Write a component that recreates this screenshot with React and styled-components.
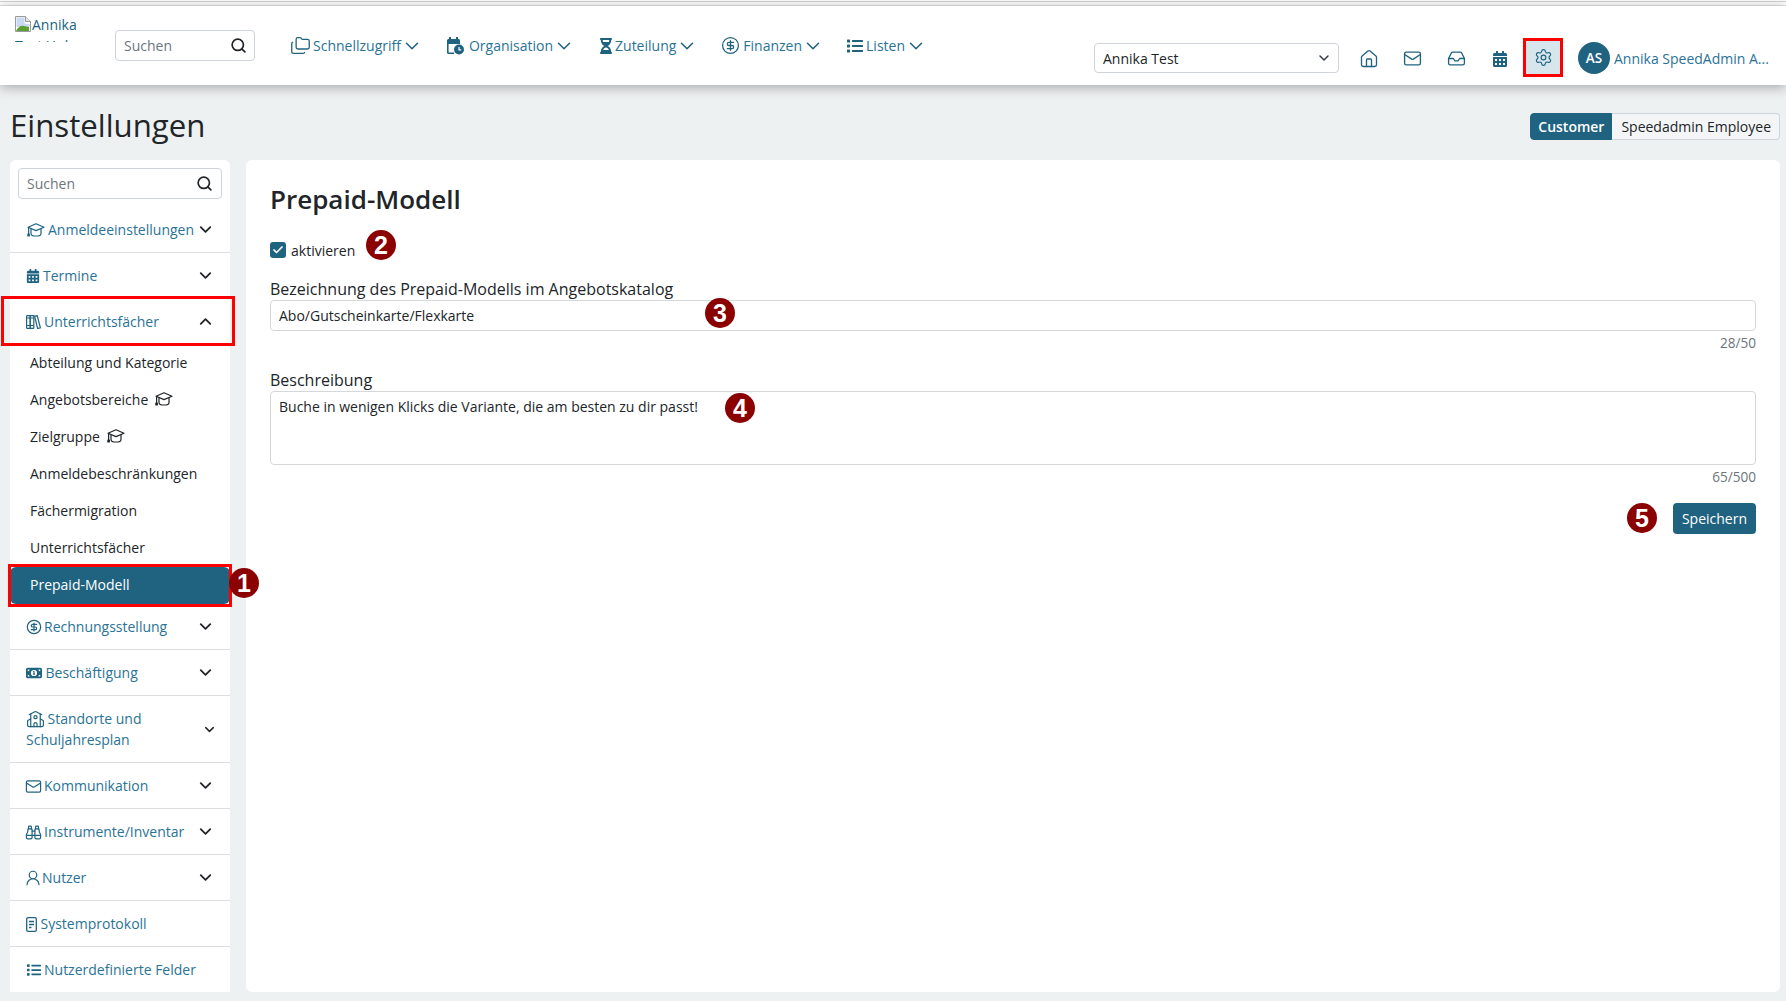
import React from "react";
import styled, { createGlobalStyle } from "styled-components";
import {
  ChevronDown,
  ChevronUp,
  CircleDollarSign,
  Folders,
  House,
  Inbox,
  Mail,
  School,
  Search,
  Settings,
  Binoculars,
  UserRound,
  Check,
} from "lucide-react";
import { FaCalendarAlt, FaHourglassHalf, FaList } from "react-icons/fa";
import { FaMoneyBill1 } from "react-icons/fa6";

const TEAL = "#206380";
const LINK = "#2a7396";

const GlobalStyle = createGlobalStyle`
  html, body {
    margin: 0;
    padding: 0;
    background: #eef1f2;
    font-family: "Open Sans", "Liberation Sans", sans-serif;
    font-size: 14px;
    color: #212529;
    overflow: hidden;
  }
  * { box-sizing: border-box; }
`;

const ClockSvg = styled.svg`
  margin-right: 2px;
`;

function CalendarClock() {
  return (
    <ClockSvg width="18" height="18" viewBox="0 0 18 18" fill={TEAL}>
      <rect x="3" y="0" width="2" height="3" />
      <rect x="10" y="0" width="2" height="3" />
      <path d="M1 3.5a1.5 1.5 0 0 1 1.5-1.5h10A1.5 1.5 0 0 1 14 3.5V7H1z" />
      <path d="M1 7h1.6v8.4h5.6V17H2.5A1.5 1.5 0 0 1 1 15.5z" />
      <circle cx="13" cy="12.5" r="5" />
      <path d="M13 10v2.8h2.2" stroke="#fff" strokeWidth="1.2" fill="none" />
    </ClockSvg>
  );
}

function Books() {
  return (
    <svg width="15" height="14" viewBox="0 0 15 14" fill="none" stroke={TEAL} strokeWidth="1.2">
      <rect x="0.6" y="0.6" width="3.6" height="12.8" rx="0.6" />
      <rect x="4.2" y="0.6" width="3.6" height="12.8" rx="0.6" />
      <path d="M8.6 1.2l2.6-.6 3.2 12.2-2.8.7z" />
      <path d="M0.6 10.5h7.2M0.6 3h7.2" />
    </svg>
  );
}

function GradCap({ color = TEAL }) {
  return (
    <svg width="18" height="14" viewBox="0 0 18 14" fill="none" stroke={color} strokeWidth="1.2" strokeLinejoin="round">
      <path d="M9 .8l8 3.4-8 3.4-8-3.4z" />
      <path d="M4 5.8v4.6c0 1.5 2.3 2.6 5 2.6s5-1.1 5-2.6V5.8" />
      <path d="M1.6 4.6v6.4" />
      <path d="M.9 11h1.4v2H.9z" fill={color} />
    </svg>
  );
}

function LogFile() {
  return (
    <svg width="11" height="15" viewBox="0 0 11 15" fill="none" stroke={TEAL} strokeWidth="1.3">
      <rect x="0.7" y="0.7" width="9.6" height="13.6" rx="1.4" />
      <path d="M3 4.5h5M3 7.5h5M3 10.5h2.5" />
    </svg>
  );
}

function BrokenImage() {
  return (
    <svg width="16" height="16" viewBox="0 0 16 16">
      <path d="M.5.5h10l5 5v10H.5z" fill="#fff" stroke="#9a9a9a" />
      <path d="M10.5.5v5h5" fill="#e8e8e8" stroke="#9a9a9a" />
      <path d="M1.5 1.5h8v6l5 .5v3H1.5z" fill="#c9d9f2" />
      <path d="M1 15c2-4 5-6 8-5l5 1v4z" fill="#5b9e33" />
    </svg>
  );
}

const FolderIcon = styled(Folders)`
  margin: 0 -1px 0 -1px;
`;

const HourglassIcon = styled(FaHourglassHalf)`
  margin-right: -2px;
`;

const navItems = [
  { label: "Schnellzugriff", icon: <FolderIcon size={21} strokeWidth={1.5} /> },
  { label: "Organisation", icon: <CalendarClock /> },
  { label: "Zuteilung", icon: <HourglassIcon size={16} /> },
  { label: "Finanzen", icon: <CircleDollarSign size={19} strokeWidth={1.6} /> },
  { label: "Listen", icon: <FaList size={16} /> },
];

const sideTop = [
  { label: "Anmeldeeinstellungen", icon: <GradCap />, w: 19, chevron: true },
  { label: "Termine", icon: <FaCalendarAlt size={14} />, w: 14, chevron: true },
];

const subItems = [
  { label: "Abteilung und Kategorie" },
  { label: "Angebotsbereiche", cap: true },
  { label: "Zielgruppe", cap: true },
  { label: "Anmeldebeschränkungen" },
  { label: "Fächermigration" },
  { label: "Unterrichtsfächer" },
];

const sideBottom = [
  { label: "Rechnungsstellung", icon: <CircleDollarSign size={16} strokeWidth={1.8} />, w: 15, chevron: true },
  { label: "Beschäftigung", icon: <FaMoneyBill1 size={16} />, w: 16.5, chevron: true },
  { label: "Standorte und Schuljahresplan", icon: <School size={19} strokeWidth={1.5} />, w: 18.5, chevron: true, tall: true },
  { label: "Kommunikation", icon: <Mail size={17} strokeWidth={1.7} />, w: 15, chevron: true },
  { label: "Instrumente/Inventar", icon: <Binoculars size={17} strokeWidth={1.7} />, w: 15, chevron: true },
  { label: "Nutzer", icon: <UserRound size={18} strokeWidth={1.6} />, w: 13, chevron: true },
  { label: "Systemprotokoll", icon: <LogFile />, w: 11.5 },
  { label: "Nutzerdefinierte Felder", icon: <FaList size={14} />, w: 15, last: true },
];

function SideRow({ item }) {
  return (
    <Row $tall={item.tall} $last={item.last}>
      <RowLabel $tall={item.tall}>
        <RowIcon $w={item.w}>{item.icon}</RowIcon>
        {item.label}
      </RowLabel>
      {item.chevron && (
        <RowChevron $tall={item.tall}>
          <ChevronDown size={item.tall ? 15 : 19} strokeWidth={2.3} />
        </RowChevron>
      )}
    </Row>
  );
}

export default function App() {
  return (
    <>
      <GlobalStyle />
      <TopStrip />
      <Header>
        <Logo>
          <LogoLine>
            <BrokenImage />
            Annika
          </LogoLine>
          <LogoLine>Test Hub</LogoLine>
        </Logo>
        <HeaderSearch>
          <span>Suchen</span>
          <Search size={17} strokeWidth={2.4} color="#212529" />
        </HeaderSearch>
        <Nav>
          {navItems.map((item) => (
            <NavItem key={item.label}>
              {item.icon}
              <span>{item.label}</span>
              <NavChevron size={22} strokeWidth={1.7} />
            </NavItem>
          ))}
        </Nav>
        <HeaderRight>
          <SchoolSelect>
            <span>Annika Test</span>
            <ChevronDown size={16} strokeWidth={2.2} color="#343a40" />
          </SchoolSelect>
          <IconGroup>
            <IconButton><House size={20} strokeWidth={1.6} /></IconButton>
            <IconButton><Mail size={19} strokeWidth={1.7} /></IconButton>
            <IconButton><Inbox size={19} strokeWidth={1.7} /></IconButton>
            <IconButton><FaCalendarAlt size={16} /></IconButton>
            <IconButton $active><Settings size={19} strokeWidth={1.5} /></IconButton>
          </IconGroup>
          <Avatar>AS</Avatar>
          <UserName>Annika SpeedAdmin A...</UserName>
        </HeaderRight>
      </Header>

      <TitleBar>
        <PageTitle>Einstellungen</PageTitle>
        <RoleToggle>
          <RoleButton $active>Customer</RoleButton>
          <RoleButton>Speedadmin Employee</RoleButton>
        </RoleToggle>
      </TitleBar>

      <Columns>
        <Sidebar>
          <SideSearchWrap>
            <SideSearch>
              <span>Suchen</span>
              <Search size={17} strokeWidth={2.4} color="#212529" />
            </SideSearch>
          </SideSearchWrap>
          {sideTop.map((item) => (
            <SideRow key={item.label} item={item} />
          ))}
          <Row $open>
            <RowLabel>
              <RowIcon $w={15}><Books /></RowIcon>
              Unterrichtsfächer
            </RowLabel>
            <RowChevron><ChevronUp size={19} strokeWidth={2.3} /></RowChevron>
            <Highlight $inset="-3px -5px -1px -9px" />
          </Row>
          {subItems.map((item) => (
            <SubItem key={item.label}>
              {item.label}
              {item.cap && <GradCap color="#212529" />}
            </SubItem>
          ))}
          <SubItem $active>
            Prepaid-Modell
            <Highlight $inset="-3px -2px" />
            <Badge $left="219px" $top="1px">1</Badge>
          </SubItem>
          {sideBottom.map((item) => (
            <SideRow key={item.label} item={item} />
          ))}
        </Sidebar>

        <Panel>
          <PanelTitle>Prepaid-Modell</PanelTitle>
          <CheckRow>
            <CheckBox><Check size={12} strokeWidth={3.5} color="#fff" /></CheckBox>
            <span>aktivieren</span>
            <Badge $left="96px" $top="-9px">2</Badge>
          </CheckRow>
          <Field>
            <FieldLabel>Bezeichnung des Prepaid-Modells im Angebotskatalog</FieldLabel>
            <TextBox>Abo/Gutscheinkarte/Flexkarte</TextBox>
            <Counter>28/50</Counter>
            <Badge $left="435px" $top="20px">3</Badge>
          </Field>
          <Field $second>
            <FieldLabel>Beschreibung</FieldLabel>
            <TextBox $area>Buche in wenigen Klicks die Variante, die am besten zu dir passt!</TextBox>
            <Counter>65/500</Counter>
            <Badge $left="455px" $top="24px">4</Badge>
          </Field>
          <Actions>
            <SaveButton>
              Speichern
              <Badge $left="-46px" $top="0px">5</Badge>
            </SaveButton>
          </Actions>
        </Panel>
      </Columns>
    </>
  );
}

const TopStrip = styled.div`
  height: 6px;
  background: #fff;
  border-top: 1px solid #fff;
  border-bottom: 1px solid #e4e4e4;
  box-shadow: inset 0 1px 0 #d2d2d2;
`;

const Header = styled.header`
  position: relative;
  z-index: 2;
  height: 79px;
  background: #fff;
  display: flex;
  align-items: flex-start;
  padding: 24px 17px 0 15px;
  box-shadow: 0 2px 12px rgba(0, 0, 0, 0.32);
`;

const Logo = styled.div`
  width: 65px;
  height: 28px;
  margin-top: -16px;
  margin-right: 35px;
  overflow: hidden;
  color: ${TEAL};
  line-height: 21px;
`;

const LogoLine = styled.div`
  display: flex;
  align-items: center;
  white-space: nowrap;
  height: 21px;

  svg {
    flex: none;
    margin-right: 1px;
    margin-top: -2px;
  }
`;

const HeaderSearch = styled.div`
  width: 140px;
  height: 31px;
  border: 1px solid #ced4da;
  border-radius: 4px;
  padding: 0 7px 0 8px;
  display: flex;
  align-items: center;
  justify-content: space-between;
  color: #6c757d;
`;

const Nav = styled.nav`
  display: flex;
  gap: 29px;
  margin-left: 36px;
  height: 31px;
  align-items: center;
`;

const NavItem = styled.div`
  display: flex;
  align-items: center;
  gap: 3px;
  color: ${LINK};
  white-space: nowrap;

  svg {
    color: ${TEAL};
    flex: none;
  }
`;

const NavChevron = styled(ChevronDown)`
  margin: 0 -6px 0 -3px;
`;

const HeaderRight = styled.div`
  margin-left: auto;
  margin-top: 8px;
  display: flex;
  align-items: center;
`;

const SchoolSelect = styled.div`
  width: 245px;
  height: 30px;
  border: 1px solid #ced4da;
  border-radius: 4px;
  padding: 0 6px 0 8px;
  display: flex;
  align-items: center;
  justify-content: space-between;
  margin-right: 10px;
`;

const IconGroup = styled.div`
  display: flex;
  align-items: flex-start;
  gap: 3.5px;
  margin-right: 15px;
`;

const IconButton = styled.div`
  width: 40px;
  height: 39px;
  margin-top: ${(p) => (p.$active ? "0" : "1px")};
  display: flex;
  align-items: center;
  justify-content: center;
  color: ${TEAL};
  background: ${(p) => (p.$active ? "#d7e6ed" : "transparent")};
  border: ${(p) => (p.$active ? "3px solid #fe0000" : "none")};
`;

const Avatar = styled.div`
  width: 32px;
  height: 32px;
  border-radius: 50%;
  background: ${TEAL};
  color: #fff;
  font-weight: 600;
  font-size: 13.5px;
  display: flex;
  align-items: center;
  justify-content: center;
  margin-right: 4px;
`;

const UserName = styled.div`
  color: ${LINK};
  white-space: nowrap;
  width: 155px;
`;

const TitleBar = styled.div`
  display: flex;
  align-items: center;
  justify-content: space-between;
  height: 27px;
  margin: 28px 6px 20px 10px;
`;

const PageTitle = styled.h1`
  margin: 0 0 3px;
  font-size: 31.2px;
  font-weight: 500;
  color: #212529;
`;

const RoleToggle = styled.div`
  display: flex;
`;

const RoleButton = styled.div`
  height: 27px;
  display: flex;
  align-items: center;
  padding: ${(p) => (p.$active ? "0 7px" : "0 8px 0 9px")};
  font-weight: ${(p) => (p.$active ? 600 : 400)};
  color: ${(p) => (p.$active ? "#fff" : "#212529")};
  background: ${(p) => (p.$active ? TEAL : "#f4f5f6")};
  border: 1px solid ${(p) => (p.$active ? TEAL : "#ced4da")};
  border-left-width: ${(p) => (p.$active ? 1 : 0)}px;
  border-radius: ${(p) => (p.$active ? "4px 0 0 4px" : "0 4px 4px 0")};
`;

const Columns = styled.div`
  display: flex;
  align-items: stretch;
  gap: 16px;
  height: 832px;
  padding: 0 6px 0 10px;
`;

const Sidebar = styled.aside`
  flex: none;
  width: 220px;
  background: #fff;
  border-radius: 6px 6px 0 0;
`;

const SideSearchWrap = styled.div`
  height: 47px;
  padding: 8px;
`;

const SideSearch = styled(HeaderSearch)`
  width: 100%;
  padding-right: 8px;
`;

const Row = styled.div`
  position: relative;
  height: ${(p) => (p.$tall ? 67 : p.$last ? 45 : 46)}px;
  display: flex;
  align-items: center;
  justify-content: space-between;
  padding: 0 16px ${(p) => (p.$open ? "2px" : "0")};
  color: ${LINK};
  border-bottom: ${(p) => (p.$open || p.$last ? "none" : "1px solid #dcdfe2")};
`;

const RowLabel = styled.div`
  line-height: 21px;
  white-space: ${(p) => (p.$tall ? "normal" : "nowrap")};
  max-width: ${(p) => (p.$tall ? "150px" : "none")};
`;

const RowIcon = styled.span`
  display: inline-flex;
  align-items: center;
  justify-content: center;
  width: ${(p) => p.$w}px;
  height: 14px;
  vertical-align: middle;
  margin: 0 3px 2px 0;
  color: ${TEAL};

  svg {
    flex: none;
  }
`;

const RowChevron = styled.span`
  display: flex;
  color: #212529;
  margin-right: ${(p) => (p.$tall ? "-3px" : "-1px")};
`;

const Highlight = styled.div`
  position: absolute;
  inset: ${(p) => p.$inset};
  border: 3px solid #fe0000;
  pointer-events: none;
`;

const SubItem = styled.div`
  position: relative;
  height: 37px;
  display: flex;
  align-items: center;
  gap: 7px;
  padding-left: 20px;
  padding-bottom: 3px;
  color: ${(p) => (p.$active ? "#fff" : "#212529")};
  font-weight: ${(p) => (p.$active ? 500 : 400)};
  background: ${(p) => (p.$active ? TEAL : "transparent")};
  border-radius: ${(p) => (p.$active ? "6px" : "0")};
`;

const Badge = styled.span`
  position: absolute;
  left: ${(p) => p.$left};
  top: ${(p) => p.$top};
  width: 30px;
  height: 30px;
  border-radius: 50%;
  background: #8b0000;
  color: #fff;
  font-family: "Liberation Sans", Arial, sans-serif;
  font-size: 25px;
  font-weight: 700;
  display: flex;
  align-items: center;
  justify-content: center;
`;

const Panel = styled.main`
  flex: 1;
  background: #fff;
  border-radius: 6px;
  padding: 22px 24px 0;
`;

const PanelTitle = styled.h2`
  margin: 0 0 23px;
  font-size: 26px;
  font-weight: 600;
  line-height: 34px;
  color: #212529;
`;

const CheckRow = styled.div`
  position: relative;
  display: flex;
  align-items: center;
  gap: 5px;
  height: 22px;
  margin-bottom: 17px;
`;

const CheckBox = styled.span`
  width: 16px;
  height: 16px;
  border-radius: 3px;
  background: ${TEAL};
  display: flex;
  align-items: center;
  justify-content: center;
`;

const Field = styled.div`
  position: relative;
  margin-top: ${(p) => (p.$second ? "14px" : "0")};
`;

const FieldLabel = styled.div`
  font-size: 16px;
  line-height: 22px;
  height: 22px;
`;

const TextBox = styled.div`
  height: ${(p) => (p.$area ? "74px" : "31px")};
  border: 1px solid #d5d8db;
  border-radius: 4px;
  padding: ${(p) => (p.$area ? "4px 8px" : "0 8px")};
  display: ${(p) => (p.$area ? "block" : "flex")};
  align-items: center;
  line-height: 21px;
`;

const Counter = styled.div`
  text-align: right;
  font-size: 13.6px;
  color: #6c757d;
  line-height: 24px;
`;

const Actions = styled.div`
  display: flex;
  justify-content: flex-end;
  margin-top: 14px;
`;

const SaveButton = styled.div`
  position: relative;
  width: 83px;
  height: 31px;
  border-radius: 4px;
  background: ${TEAL};
  color: #fff;
  display: flex;
  align-items: center;
  justify-content: center;
`;
